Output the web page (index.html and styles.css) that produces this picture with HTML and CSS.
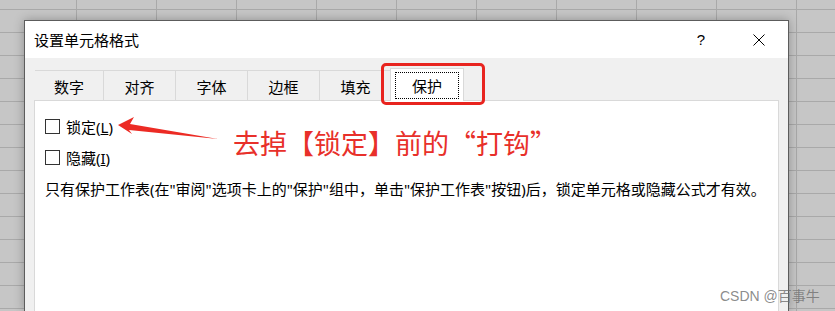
FILE: index.html
```html
<!DOCTYPE html>
<html lang="zh-CN">
<head>
  <meta charset="UTF-8">
  <title>设置单元格格式</title>
  <link rel="stylesheet" href="styles.css">
</head>
<body>
  <div class="dialog">
    <div class="titlebar">
      <div class="title">设置单元格格式</div>
      <div class="title-btn help">?</div>
      <div class="title-btn close">
        <svg width="12" height="12" viewBox="0 0 12 12">
          <path d="M0.5 0.5 L11.5 11.5 M11.5 0.5 L0.5 11.5" stroke="#000" stroke-width="1" fill="none"/>
        </svg>
      </div>
    </div>
    <div class="dialog-body">
      <div class="tabs">
        <div class="tab first">数字</div>
        <div class="tab">对齐</div>
        <div class="tab">字体</div>
        <div class="tab">边框</div>
        <div class="tab">填充</div>
        <div class="tab active"><span class="focus">保护</span></div>
      </div>
      <div class="panel">
        <div class="check-row">
          <span class="checkbox"></span>
          <span class="check-label">锁定(<u>L</u>)</span>
        </div>
        <div class="check-row">
          <span class="checkbox"></span>
          <span class="check-label">隐藏(<u>I</u>)</span>
        </div>
        <p class="note">只有保护工作表(在"审阅"选项卡上的"保护"组中，单击"保护工作表"按钮)后，锁定单元格或隐藏公式才有效。</p>
      </div>
    </div>
  </div>

  <!-- annotation overlay -->
  <div class="mark-box"></div>
  <svg class="mark-arrow" width="115" height="40" viewBox="0 0 115 40">
    <polygon points="8,15 24,7 20,14 108,29 19,20 22,24" fill="#ec2b24"/>
  </svg>
  <div class="mark-text">去掉【锁定】前的“打钩”</div>

  <div class="watermark">CSDN @百事牛</div>
</body>
</html>
```

FILE: styles.css
```css
body {
  margin: 0;
  width: 835px;
  height: 311px;
  overflow: hidden;
  position: relative;
  font-family: "Noto Sans", "Noto Sans CJK SC", sans-serif;
  color: #000;
  background-color: #c6c6c6; /* dimmed sheet */
  background-image:
    linear-gradient(to right, #a9a9a9 1px, transparent 1px),
    linear-gradient(to bottom, #a9a9a9 1px, transparent 1px);
  background-size: 80px 23px;
  background-position: 76px 9px;
}
.dialog {
  margin: 20px 0 0 24px;
  width: 763px;
  height: 290px;
  overflow: hidden;
  border: 1px solid #5c5c5c;
  border-bottom: none;
  background: #f0f0f0;
  box-shadow: 0 0 10px rgba(0, 0, 0, 0.28);
}
.titlebar {
  height: 37px;
  background: #fff;
  display: flex;
  align-items: center;
}
.title {
  flex: 1;
  padding-left: 9px;
  font-size: 15px;
  font-family: "Noto Sans CJK SC", sans-serif;
}
.title-btn {
  width: 46px;
  display: flex;
  justify-content: center;
  align-items: center;
  height: 37px;
}
.help {
  margin-right: 12px;
  font-size: 15px;
  font-family: "Liberation Sans", sans-serif;
}
.close {
  margin-right: 6px;
}
.dialog-body {
  padding: 12px 9px 0 9px;
}
.tabs {
  display: flex;
  height: 30px;
  margin-left: 1px;
}
.tab {
  width: 72px;
  height: 30px;
  box-sizing: border-box;
  border-top: 1px solid #d9d9d9;
  border-right: 1px solid #d9d9d9;
  display: flex;
  justify-content: center;
  align-items: center;
  font-size: 15px;
  font-family: "Noto Sans CJK SC", sans-serif;
  padding-top: 2px;
}
.tab.first {
  width: 69px;
}
.tab.active {
  width: 74px;
  height: 33px;
  margin-top: -2px;
  margin-left: -2px;
  background: #fff;
  border: 1px solid #d9d9d9;
  border-bottom: none;
  position: relative;
  z-index: 1;
  padding-top: 0;
}
.focus {
  border: 1px dotted #000;
  padding: 2px 13px;
  width: 36px;
  height: 21px;
  display: flex;
  justify-content: center;
  align-items: center;
}
.panel {
  height: 220px;
  background: #fff;
  border: 1px solid #d9d9d9;
  padding: 17px 10px 0 10px;
}
.check-row {
  display: flex;
  align-items: center;
  height: 17px;
  margin-bottom: 14px;
}
.checkbox {
  flex: none;
  box-sizing: border-box;
  width: 15px;
  height: 15px;
  border: 1px solid #333;
  background: #fff;
  margin-top: -1px;
}
.check-label {
  margin-left: 6px;
  font-size: 15px;
}
.note {
  margin: -2px 0 0 0;
  font-size: 15px;
  white-space: nowrap;
}
.mark-box {
  position: absolute;
  left: 381px;
  top: 63px;
  width: 98px;
  height: 36px;
  border: 3px solid #e8241f;
  border-radius: 5px;
}
.mark-arrow {
  position: absolute;
  left: 110px;
  top: 110px;
}
.mark-text {
  position: absolute;
  left: 233px;
  top: 125px;
  font-family: "Noto Sans CJK SC", sans-serif;
  font-size: 27px;
  line-height: 36px;
  color: #e8302a;
}
.watermark {
  position: absolute;
  left: 720px;
  top: 285px;
  font-size: 14px;
  color: rgba(110, 110, 110, 0.8);
  font-family: "Liberation Sans", "Noto Sans CJK SC", sans-serif;
}
```
